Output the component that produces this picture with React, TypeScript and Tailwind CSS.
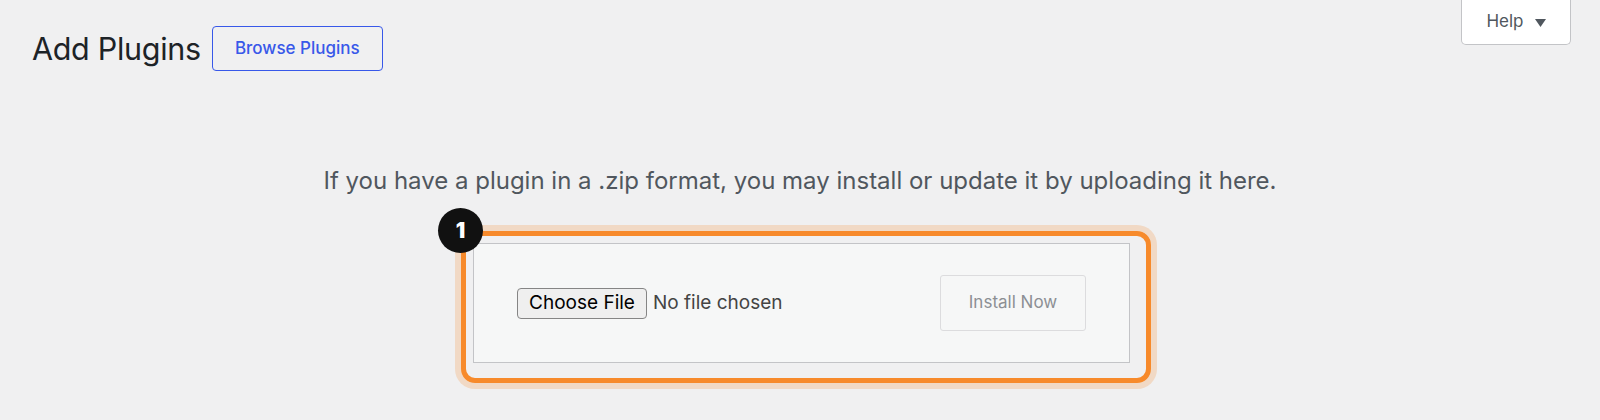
export default function App() {
  return (
    <div className="relative h-[420px] w-full overflow-hidden bg-[#f0f0f1] font-['Inter','Noto_Sans',sans-serif] text-[#1d2327]">
      {/* Help tab */}
      <div className="absolute right-[29px] top-0 flex h-[45px] w-[110px] items-center justify-center gap-[11px] rounded-b-[5px] border border-t-0 border-[#c3c4c7] bg-white text-[17px] text-[#50575e]">
        <span>Help</span>
        <svg width="11" height="8" viewBox="0 0 11 8" className="mt-[1px]">
          <path d="M0 0h11L5.5 8z" fill="#50575e" />
        </svg>
      </div>

      <div className="flex items-center gap-[11px] pl-[32px] pt-[26px]">
        <h1 className="text-[30.5px] font-normal leading-[45px] tracking-[-0.3px]">Add Plugins</h1>
        <button className="flex h-[45px] w-[171px] items-center justify-center rounded-[4px] border border-[#3858e9] text-[17px] font-medium text-[#3858e9]">
          Browse Plugins
        </button>
      </div>

      <p className="mt-[95px] text-center text-[24px] leading-[30px] text-[#50575e]">
        If you have a plugin in a .zip format, you may install or update it by uploading it here.
      </p>

      <div className="mt-[47px] flex justify-center">
        <div className="relative ml-[3px] w-[657px]">
          {/* highlight */}
          <div className="pointer-events-none absolute -bottom-[20px] -left-[12px] -right-[21px] -top-[12px] rounded-[14px] border-[5px] border-[#f78a2b] shadow-[0_0_0_6px_rgba(247,138,43,0.22)]" />
          <div className="absolute -left-[35px] -top-[35px] flex h-[45px] w-[45px] items-center justify-center rounded-full bg-[#111] text-[21px] font-black text-white">
            1
          </div>
          <div className="flex h-[120px] items-center justify-between border border-[#c3c4c7] bg-[#f6f7f7] px-[43px]">
            <div className="flex items-center gap-[6px]">
              <button className="h-[31px] w-[130px] rounded-[4px] border border-[#858585] bg-[#efefef] text-[19px] text-black">
                Choose File
              </button>
              <span className="text-[19px] text-[#444]">No file chosen</span>
            </div>
            <button className="h-[56px] w-[146px] rounded-[3px] border border-[#dcdcde] bg-[#f6f7f7] text-[17px] text-[#8c8f94]">
              Install Now
            </button>
          </div>
        </div>
      </div>
    </div>
  );
}
